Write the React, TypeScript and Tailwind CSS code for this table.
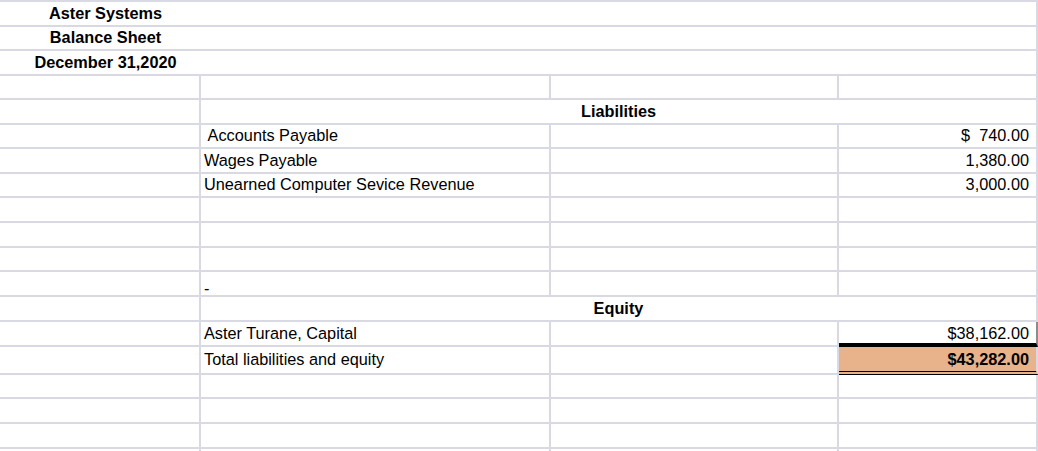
type Cell = {
    text?: string
    bold?: boolean
    align?: 'left' | 'right' | 'center'
    className?: string
    textClass?: string
}

type Row = {
    h: number
    kind: 'title' | 'grid' | 'merged'
    cells?: Cell[]
    pb?: string
}

const widths = ['w-[201px]', 'w-[350px]', 'w-[288px]', 'w-[199px]']

const rows: Row[] = [
    { h: 25, kind: 'title', cells: [{ text: 'Aster Systems' }] },
    { h: 24, kind: 'title', cells: [{ text: 'Balance Sheet' }] },
    { h: 25, kind: 'title', cells: [{ text: 'December 31,2020' }] },
    { h: 24, kind: 'grid' },
    { h: 25, kind: 'merged', cells: [{ text: 'Liabilities' }] },
    {
        h: 24,
        kind: 'grid',
        cells: [{}, { text: ' Accounts Payable' }, {}, { text: '$  740.00', align: 'right' }]
    },
    {
        h: 25,
        kind: 'grid',
        cells: [{}, { text: 'Wages Payable' }, {}, { text: '1,380.00', align: 'right' }]
    },
    {
        h: 24,
        kind: 'grid',
        cells: [
            {},
            { text: 'Unearned Computer Sevice Revenue' },
            {},
            { text: '3,000.00', align: 'right' }
        ]
    },
    { h: 25, kind: 'grid' },
    { h: 25, kind: 'grid' },
    { h: 24, kind: 'grid' },
    {
        h: 25,
        kind: 'grid',
        cells: [{}, { text: '-', textClass: 'inline-block translate-y-[5px]' }, {}, {}]
    },
    { h: 25, kind: 'merged', cells: [{ text: 'Equity' }] },
    {
        h: 25,
        kind: 'grid',
        cells: [
            {},
            { text: 'Aster Turane, Capital' },
            {},
            {
                text: '$38,162.00',
                align: 'right',
                className: '!border-b-4 !border-b-black !border-r-[#8c8c8c] !pb-[1px]'
            }
        ]
    },
    {
        h: 28,
        kind: 'grid',
        pb: 'pb-[5px]',
        cells: [
            {},
            { text: 'Total liabilities and equity' },
            {},
            {
                text: '$43,282.00',
                align: 'right',
                bold: true,
                className:
                    'bg-[#e8b38b] !border-b-4 !border-double !border-b-black !pb-[3px]'
            }
        ]
    },
    { h: 24, kind: 'grid' },
    { h: 25, kind: 'grid' },
    { h: 25, kind: 'grid' },
    { h: 24, kind: 'grid' }
]

const SheetRow = ({ row }: { row: Row }) => {
    const base =
        'h-full border-b-2 border-r-2 border-[#d9d9e3] flex items-end whitespace-pre overflow-hidden'

    if (row.kind === 'title') {
        return (
            <div className="flex" style={{ height: row.h }}>
                <div className={`${base} w-[1038px] pb-[3px]`}>
                    <div className="w-[211px] text-center font-bold">
                        {row.cells?.[0].text}
                    </div>
                </div>
            </div>
        )
    }

    if (row.kind === 'merged') {
        return (
            <div className="flex" style={{ height: row.h }}>
                <div className={`${base} w-[201px]`} />
                <div className={`${base} w-[837px] justify-center pb-[3px] font-bold`}>
                    {row.cells?.[0].text}
                </div>
            </div>
        )
    }

    return (
        <div className="flex" style={{ height: row.h }}>
            {widths.map((w, i) => {
                const c = row.cells?.[i] || {}
                return (
                    <div
                        key={i}
                        className={`${base} ${w} ${row.pb || 'pb-[3px]'} ${
                            c.align === 'right' ? 'justify-end pr-[7px]' : 'pl-[3px]'
                        } ${c.bold ? 'font-bold' : ''} ${c.className || ''}`}
                    >
                        {c.text && <span className={c.textClass || ''}>{c.text}</span>}
                    </div>
                )
            })}
        </div>
    )
}

export default function App() {
    return (
        <div
            className="w-[1038px] h-[451px] overflow-hidden bg-white text-black text-[16.3px] leading-[18px]"
            style={{ fontFamily: '"Liberation Sans", Arial, sans-serif' }}
        >
            <div className="flex h-[2px]">
                <div className="w-[1038px] bg-[#d9d9e3]" />
            </div>
            {rows.map((r, i) => (
                <SheetRow key={i} row={r} />
            ))}
        </div>
    )
}
